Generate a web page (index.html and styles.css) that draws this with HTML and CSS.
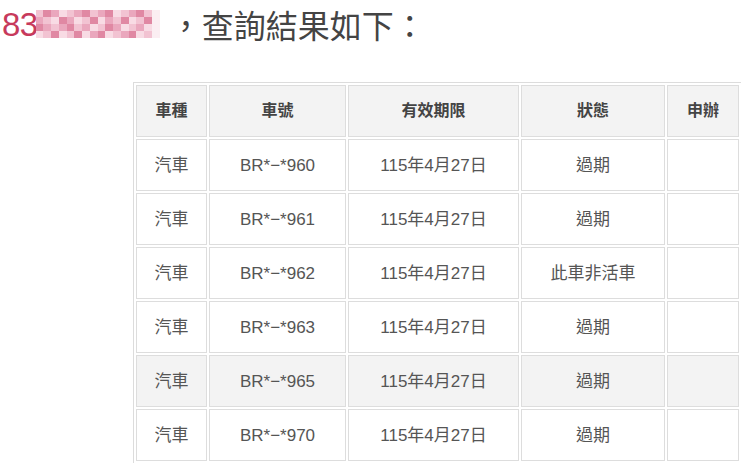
FILE: index.html
```html
<!DOCTYPE html>
<html lang="zh-Hant">
<head>
<meta charset="utf-8">
<title>查詢結果</title>
<link rel="stylesheet" href="styles.css">
</head>
<body>
<div class="title">
  <span class="num">83</span>
  <span class="mosaic">
    <i class="b"></i><i class="c"></i><i class="a"></i><i class="d"></i><i class="b"></i><i class="a"></i><i class="c"></i><i class="b"></i><i class="a"></i><i class="c"></i><i class="d"></i><i class="b"></i><i class="a"></i><i class="c"></i><i class="b"></i><i class="e"></i>
    <i class="a"></i><i class="b"></i><i class="d"></i><i class="c"></i><i class="a"></i><i class="d"></i><i class="b"></i><i class="c"></i><i class="d"></i><i class="a"></i><i class="b"></i><i class="c"></i><i class="d"></i><i class="b"></i><i class="c"></i><i class="e"></i>
    <i class="c"></i><i class="a"></i><i class="b"></i><i class="a"></i><i class="c"></i><i class="b"></i><i class="a"></i><i class="d"></i><i class="b"></i><i class="c"></i><i class="a"></i><i class="d"></i><i class="b"></i><i class="a"></i><i class="d"></i><i class="e"></i>
    <i class="d"></i><i class="b"></i><i class="c"></i><i class="d"></i><i class="b"></i><i class="c"></i><i class="d"></i><i class="a"></i><i class="c"></i><i class="d"></i><i class="b"></i><i class="a"></i><i class="c"></i><i class="d"></i><i class="b"></i><i class="e"></i>
  </span>
  <span class="rest">，查詢結果如下：</span>
</div>
<table class="result">
  <thead>
    <tr><th class="c1">車種</th><th class="c2">車號</th><th class="c3">有效期限</th><th class="c4">狀態</th><th class="c5">申辦</th></tr>
  </thead>
  <tbody>
    <tr><td>汽車</td><td>BR*−*960</td><td>115年4月27日</td><td>過期</td><td></td></tr>
    <tr><td>汽車</td><td>BR*−*961</td><td>115年4月27日</td><td>過期</td><td></td></tr>
    <tr><td>汽車</td><td>BR*−*962</td><td>115年4月27日</td><td>此車非活車</td><td></td></tr>
    <tr><td>汽車</td><td>BR*−*963</td><td>115年4月27日</td><td>過期</td><td></td></tr>
    <tr class="hl"><td>汽車</td><td>BR*−*965</td><td>115年4月27日</td><td>過期</td><td></td></tr>
    <tr><td>汽車</td><td>BR*−*970</td><td>115年4月27日</td><td>過期</td><td></td></tr>
  </tbody>
</table>
</body>
</html>
```
FILE: styles.css
```css
html, body {
  margin: 0;
  padding: 0;
  background: #fff;
}
body {
  font-family: "Liberation Sans", "Noto Sans CJK TC", sans-serif;
  color: #555;
  overflow: hidden;
}
.title {
  display: flex;
  align-items: center;
  height: 48px;
  padding-left: 2px;
  margin-bottom: 34px;
}
.num {
  font-family: "Liberation Sans", sans-serif;
  font-size: 33px;
  color: #c73a5c;
  line-height: 1;
  letter-spacing: -0.5px;
}
.mosaic {
  display: grid;
  grid-template-columns: repeat(16, 1fr);
  grid-template-rows: repeat(4, 1fr);
  width: 124px;
  height: 28px;
  margin-left: -2px;
}
.mosaic i { display: block; }
.mosaic .a { background: #eaa7bd; }
.mosaic .b { background: #f2c3d2; }
.mosaic .c { background: #e088a3; }
.mosaic .d { background: #f8dbe4; }
.mosaic .e { background: #fbeef2; }
.rest {
  font-family: "Noto Sans CJK TC", sans-serif;
  font-size: 32px;
  color: #444;
  margin-left: 10px;
  line-height: 1;
}
.result {
  margin-left: 133px;
  border-collapse: separate;
  border-spacing: 2px;
  border-top: 1px solid #dcdcdc;
  border-left: 1px solid #dcdcdc;
}
.result th, .result td {
  border: 1px solid #dddddd;
  height: 50px;
  padding: 0;
  text-align: center;
  font-size: 17px;
  line-height: 1;
}
.result th {
  background: #f3f3f3;
  color: #444;
  font-weight: bold;
  font-size: 16px;
}
.result td { color: #555; background: #fff; }
.result tr.hl td { background: #f3f3f3; }
.c1 { width: 69px; }
.c2 { width: 135px; }
.c3 { width: 169px; }
.c4 { width: 142px; }
.c5 { width: 70px; }
```
